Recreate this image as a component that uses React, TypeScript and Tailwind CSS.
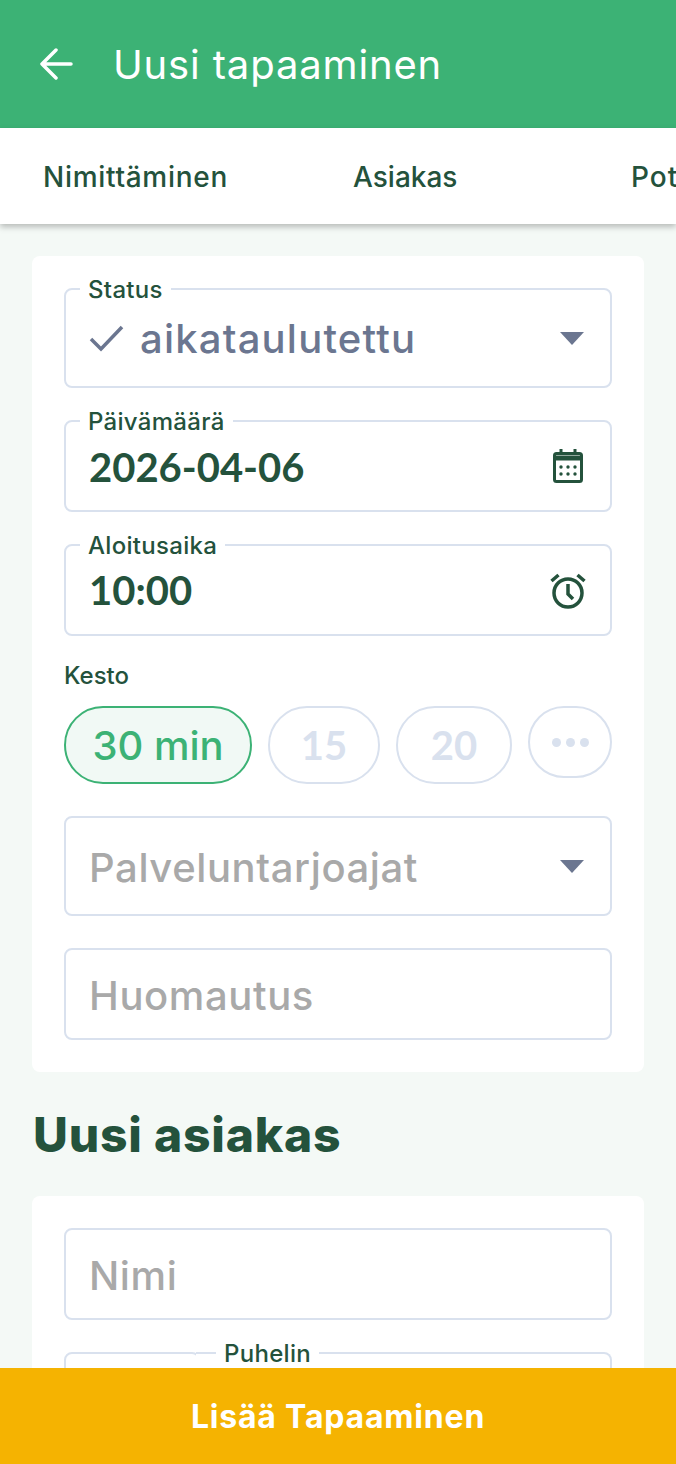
import type { ReactNode } from 'react'

const font = { fontFamily: '"Inter", "Noto Sans", sans-serif' }

function Field({ label, labelLeft = 'left-[14px]', className, children }: { label?: string; labelLeft?: string; className: string; children: ReactNode }) {
  return (
    <div className={`relative flex items-center justify-between rounded-lg border-2 border-[#d9e1ee] bg-white pl-[23px] pr-[26px] ${className}`}>
      {label && (
        <span className={`absolute -top-[14px] bg-white px-2 text-[24px] leading-[28px] font-medium tracking-[0.3px] text-[#24523c] ${labelLeft}`}>
          {label}
        </span>
      )}
      {children}
    </div>
  )
}

function Placeholder({ children }: { children: ReactNode }) {
  return <span className="pt-[3px] text-[40px] leading-none font-medium tracking-[0.6px] text-[#a9a9a9]">{children}</span>
}

function Caret() {
  return <div className="h-0 w-0 border-x-[12px] border-t-[13px] border-x-transparent border-t-[#6b7690]" />
}

function CalendarIcon() {
  return (
    <svg width="32" height="36" viewBox="0 0 32 36" fill="none" stroke="#24523c" strokeWidth="3">
      <rect x="2.5" y="5.5" width="27" height="28" rx="2" />
      <path d="M9 1v6M23 1v6M2.5 11h27" />
      <path d="M2.5 9h27" />
      <g fill="#24523c" stroke="none">
        <circle cx="9" cy="19" r="1.7" />
        <circle cx="16" cy="19" r="1.7" />
        <circle cx="23" cy="19" r="1.7" />
        <circle cx="9" cy="26" r="1.7" />
        <circle cx="16" cy="26" r="1.7" />
        <circle cx="23" cy="26" r="1.7" />
      </g>
    </svg>
  )
}

function AlarmIcon() {
  return (
    <svg className="mr-[-2px] mt-[1px]" width="36" height="36" viewBox="0 0 36 36" fill="none" stroke="#24523c" strokeWidth="3.5" strokeLinecap="butt">
      <circle cx="18" cy="20" r="14" />
      <path d="M18 11v10l5 5" />
      <path d="M1.5 8l7-6M34.5 8l-7-6" />
    </svg>
  )
}

export default function App() {
  return (
    <div className="flex h-[1464px] w-[676px] flex-col overflow-hidden bg-[#f4f9f6]" style={font}>
      {/* Header */}
      <div className="flex h-[128px] shrink-0 items-center bg-[#3cb275] pl-[40px] text-white">
        <svg width="34" height="32" viewBox="0 0 34 32" fill="none" stroke="white" strokeWidth="3.5" strokeLinecap="round" strokeLinejoin="round">
          <path d="M31 16H2M16 2L2 16l14 14" />
        </svg>
        <span className="ml-[39px] pt-[2px] text-[40px] leading-none font-normal tracking-[0.85px]">Uusi tapaaminen</span>
      </div>

      {/* Tabs */}
      <div className="relative z-10 flex h-[96px] shrink-0 items-center overflow-hidden bg-white pt-[1px] text-[28px] font-medium whitespace-nowrap text-[#24523c] shadow-[0_3px_6px_rgba(0,0,0,0.25)]">
        <span className="ml-[43px] w-[310px] shrink-0 tracking-[0.7px]">Nimittäminen</span>
        <span className="w-[278px] shrink-0">Asiakas</span>
        <span className="shrink-0 tracking-[1px]">Potilas</span>
      </div>

      {/* Scroll content */}
      <div className="flex min-h-0 flex-1 flex-col overflow-hidden px-8 pt-8">
        <div className="flex shrink-0 flex-col gap-8 rounded-lg bg-white p-8">
          <Field label="Status" className="h-[100px]">
            <div className="flex items-center gap-[15px]">
              <svg width="36" height="28" viewBox="0 0 36 28" fill="none" stroke="#6b7690" strokeWidth="3.5">
                <path d="M2 15l10 10L33 3" />
              </svg>
              <span className="pt-[2px] text-[40px] leading-none font-medium tracking-[1.2px] text-[#6b7690]">aikataulutettu</span>
            </div>
            <Caret />
          </Field>
          <Field label="Päivämäärä" className="h-[92px]">
            <span className="pt-[2px] font-['Lato'] text-[40px] leading-none font-bold text-[#24523c]">2026-04-06</span>
            <CalendarIcon />
          </Field>
          <Field label="Aloitusaika" className="h-[92px]">
            <span className="font-['Lato'] text-[40px] leading-none font-bold text-[#24523c]">10:00</span>
            <AlarmIcon />
          </Field>
          <div className="-mt-[4px] flex flex-col gap-[18px]">
            <span className="text-[24px] leading-[24px] font-medium text-[#24523c]">Kesto</span>
            <div className="flex items-start justify-between">
              <div className="flex h-[78px] w-[188px] items-center justify-center rounded-[39px] border-2 border-[#3cb275] bg-[#f1f9f5] pt-[1px] text-[40px] font-medium text-[#3cb275]">
                30 min
              </div>
              <div className="flex h-[78px] w-[112px] items-center justify-center rounded-[39px] border-2 border-[#d9e1ee] font-['Lato'] text-[40px] font-bold text-[#d9e1ee]">
                15
              </div>
              <div className="flex h-[78px] w-[116px] items-center justify-center rounded-[39px] border-2 border-[#d9e1ee] font-['Lato'] text-[40px] font-bold text-[#d9e1ee]">
                20
              </div>
              <div className="flex h-[72px] w-[84px] items-center justify-center gap-[5px] rounded-[36px] border-2 border-[#d9e1ee]">
                <span className="h-[9px] w-[9px] rounded-full bg-[#d9e1ee]" />
                <span className="h-[9px] w-[9px] rounded-full bg-[#d9e1ee]" />
                <span className="h-[9px] w-[9px] rounded-full bg-[#d9e1ee]" />
              </div>
            </div>
          </div>
          <Field className="h-[100px]">
            <Placeholder>Palveluntarjoajat</Placeholder>
            <Caret />
          </Field>
          <Field className="h-[92px]">
            <Placeholder>Huomautus</Placeholder>
          </Field>
        </div>

        <h2 className="mt-[35px] mb-[34px] ml-[1px] shrink-0 text-[48px] leading-[55px] font-extrabold tracking-[0.8px] text-[#24523c]">Uusi asiakas</h2>

        <div className="flex shrink-0 flex-col gap-8 rounded-lg bg-white p-8">
          <Field className="h-[92px]">
            <Placeholder>Nimi</Placeholder>
          </Field>
          <div className="flex">
            <div className="h-[92px] w-[136px] shrink-0 rounded-lg border-2 border-[#d9e1ee]" />
            <div className="-ml-[4px] flex-1">
              <Field label="Puhelin" labelLeft="left-[20px]" className="h-[92px] rounded-l-none border-l-0">
                <span />
              </Field>
            </div>
          </div>
        </div>
      </div>

      {/* Submit */}
      <div className="relative z-10 flex h-[96px] shrink-0 items-center justify-center bg-[#f5b301] pt-[2px] text-[32px] font-bold tracking-[0.8px] text-white">
        Lisää Tapaaminen
      </div>
    </div>
  )
}
